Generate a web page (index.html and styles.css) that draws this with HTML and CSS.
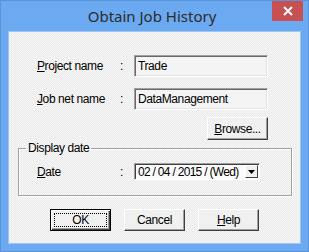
FILE: index.html
```html
<!DOCTYPE html>
<html lang="en">
<head>
    <meta charset="UTF-8">
    <title>Obtain Job History</title>
    <link rel="stylesheet" href="styles.css">
</head>
<body>
    <div class="window">
        <!-- Title bar -->
        <div class="titlebar">
            <span></span>
            <span class="title">Obtain Job History</span>
            <span class="close">
                <svg width="10" height="10" viewBox="0 0 10 10">
                    <path d="M1 1 L9 9 M9 1 L1 9" stroke="#fff" stroke-width="2"/>
                </svg>
            </span>
        </div>

        <!-- Dialog body -->
        <div class="client">
            <div class="form">
                <div class="row">
                    <span class="label"><u>P</u>roject name</span>
                    <span class="colon">:</span>
                    <div class="field">Trade</div>
                </div>
                <div class="row row-gap">
                    <span class="label"><u>J</u>ob net name</span>
                    <span class="colon">:</span>
                    <div class="field">DataManagement</div>
                </div>
                <div class="browse-row">
                    <button class="btn browse"><u>B</u>rowse...</button>
                </div>
            </div>

            <fieldset class="group">
                <legend>Display date</legend>
                <div class="row">
                    <span class="label"><u>D</u>ate</span>
                    <span class="colon">:</span>
                    <div class="combo">
                        <span class="combo-text">02 / 04 / 2015 / (Wed)</span>
                        <span class="combo-arrow">
                            <svg width="7" height="4" viewBox="0 0 7 4">
                                <path d="M0 0 H7 L3.5 4 Z" fill="#000"/>
                            </svg>
                        </span>
                    </div>
                </div>
            </fieldset>

            <div class="buttons">
                <button class="btn default"><span class="focus">OK</span></button>
                <button class="btn">Cancel</button>
                <button class="btn"><u>H</u>elp</button>
            </div>
        </div>
    </div>
</body>
</html>
```

FILE: styles.css
```css
body {
    margin: 0;
    font-family: 'Liberation Sans', Arial, sans-serif;
    font-size: 12px;
    letter-spacing: -0.4px;
    color: #000;
}

.window {
    width: 309px;
    height: 252px;
    box-sizing: border-box;
    border: 1px solid #5a93d8;
    background: #6ba9f0;
    padding: 0 7px 7px 7px;
}

.titlebar {
    display: grid;
    grid-template-columns: 1fr auto 1fr;
    height: 30px;
    margin: 0 -7px;
    padding-right: 5px;
}

.title {
    font-family: 'Noto Sans', sans-serif;
    font-size: 15px;
    letter-spacing: 0;
    color: #2b2b2b;
    line-height: 30px;
}

.close {
    justify-self: end;
    width: 31px;
    height: 20px;
    background: #c75050;
    display: flex;
    align-items: center;
    justify-content: center;
}

.client {
    height: 213px;
    box-sizing: border-box;
    border: 1px solid #9cc6f5;
    background: repeating-conic-gradient(#f8f8f8 0 25%, #e9e9e9 0 50%) 0 0 / 2px 2px;
    line-height: 14px;
}

.form {
    width: 231px;
    margin: 23px 0 0 28px;
}

.row {
    display: grid;
    grid-template-columns: 83px 14px auto;
    align-items: center;
}

.row-gap {
    margin-top: 11px;
}

.field {
    width: 134px;
    height: 22px;
    box-sizing: border-box;
    border: 1px solid;
    border-color: #a0a0a0 #fff #fff #a0a0a0;
    box-shadow: inset 1px 1px 0 #696969, inset -1px -1px 0 #e3e3e3;
    background: #f4f4f4;
    padding: 3px 0 0 3px;
}

.browse-row {
    display: flex;
    justify-content: flex-end;
    margin-top: 7px;
}

.btn {
    font: inherit;
    letter-spacing: inherit;
    color: #000;
    height: 23px;
    padding: 0;
    box-sizing: border-box;
    border: 1px solid;
    border-color: #fff #404040 #404040 #fff;
    box-shadow: inset -1px -1px 0 #a0a0a0;
    background: #f0f0f0;
}

.browse {
    width: 61px;
}

.group {
    margin: 1px 8px 0 9px;
    padding: 8px 0 15px 18px;
    border: 1px solid #a0a0a0;
    box-shadow: inset 1px 1px 0 #fff, 1px 1px 0 #fff;
}

.group legend {
    padding: 0 2px;
    margin-left: -11px;
}

.combo {
    width: 126px;
    height: 17px;
    box-sizing: border-box;
    border: 1px solid;
    border-color: #a0a0a0 #fff #fff #a0a0a0;
    box-shadow: inset 1px 1px 0 #404040;
    background: #fafafa;
    display: flex;
    align-items: center;
    justify-content: space-between;
    padding: 1px 1px 1px 3px;
}

.combo-text {
    white-space: nowrap;
    letter-spacing: -0.7px;
}

.combo-arrow {
    flex: none;
    width: 13px;
    height: 13px;
    box-sizing: border-box;
    border: 1px solid;
    border-color: #fff #404040 #404040 #fff;
    background: #f0f0f0;
    display: flex;
    align-items: center;
    justify-content: center;
}

.buttons {
    display: flex;
    justify-content: center;
    gap: 13px;
    margin-top: 13px;
}

.buttons .btn {
    width: 61px;
    height: 22px;
}

.btn.default {
    border-color: #000;
    box-shadow: inset 1px 1px 0 #fff, inset -1px -1px 0 #404040, inset -2px -2px 0 #a0a0a0;
    padding: 3px;
}

.focus {
    display: block;
    height: 100%;
    box-sizing: border-box;
    border: 1px dotted #000;
    line-height: 12px;
}
```
